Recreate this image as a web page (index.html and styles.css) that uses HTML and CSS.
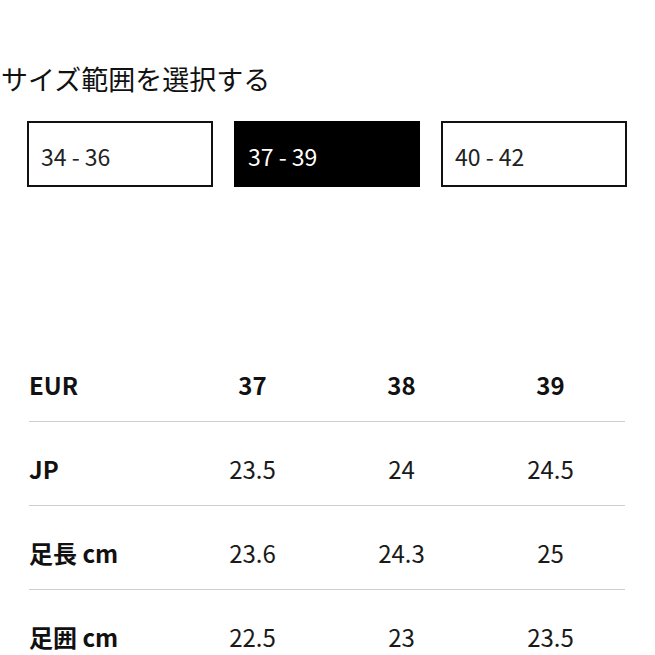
FILE: index.html
```html
<!DOCTYPE html>
<html lang="ja">
<head>
<meta charset="utf-8">
<link rel="stylesheet" href="styles.css">
</head>
<body>
<div class="page">
  <h2 class="title">サイズ範囲を選択する</h2>
  <div class="ranges">
    <div class="range">34 - 36</div>
    <div class="range active">37 - 39</div>
    <div class="range">40 - 42</div>
  </div>
  <table class="sizes">
    <tr class="head">
      <th>EUR</th><td>37</td><td>38</td><td>39</td>
    </tr>
    <tr>
      <th>JP</th><td>23.5</td><td>24</td><td>24.5</td>
    </tr>
    <tr>
      <th>足長 cm</th><td>23.6</td><td>24.3</td><td>25</td>
    </tr>
    <tr>
      <th>足囲 cm</th><td>22.5</td><td>23</td><td>23.5</td>
    </tr>
  </table>
</div>
</body>
</html>
```
FILE: styles.css
```css
html, body {
  margin: 0;
  padding: 0;
  background: #fff;
}
body {
  font-family: "Noto Sans CJK JP", "Noto Sans", sans-serif;
  color: #111;
}
.page {
  padding: 60px 0 0 0;
}
.title {
  margin: 0 0 0 1px;
  font-size: 27px;
  font-weight: 400;
  line-height: 38px;
  color: #111;
}
.ranges {
  display: flex;
  gap: 21px;
  margin: 23px 0 0 27px;
}
.range {
  box-sizing: border-box;
  width: 186px;
  height: 66px;
  border: 2px solid #111;
  padding-left: 12px;
  display: flex;
  align-items: center;
  font-size: 23px;
  color: #222;
  padding-top: 4px;
}
.range.active {
  background: #000;
  color: #fff;
  border-color: #000;
}
.sizes {
  margin: 151px 0 0 29px;
  width: 596px;
  border-collapse: collapse;
  table-layout: fixed;
}
.sizes th, .sizes td {
  width: 25%;
  padding: 35px 0 24px 0;
  line-height: 24px;
  font-size: 24px;
}
.sizes th {
  text-align: left;
  font-weight: 700;
}
.sizes td {
  text-align: center;
  font-weight: 400;
  color: #1a1a1a;
}
.sizes tr + tr th, .sizes tr + tr td {
  border-top: 1px solid #cfcfcf;
}
.sizes .head td {
  font-weight: 700;
  color: #111;
}
```
